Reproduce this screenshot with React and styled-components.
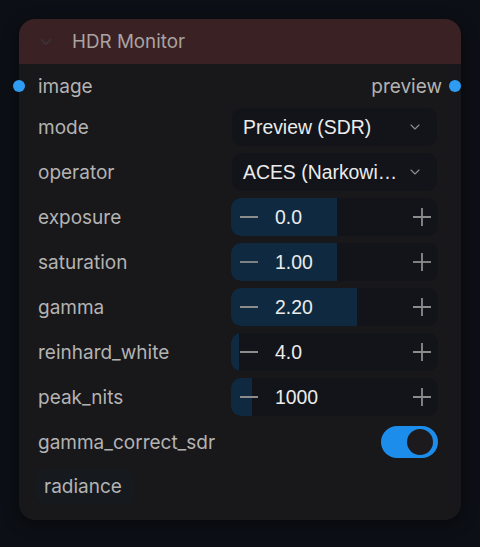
import styled, { createGlobalStyle } from 'styled-components'
import { ChevronDown } from 'lucide-react'

const GlobalStyle = createGlobalStyle`
  html, body {
    margin: 0;
    padding: 0;
    background: #0c0f15;
  }
  body {
    font-family: Inter, 'Noto Sans', sans-serif;
  }
`

const Page = styled.div`
  padding: 19px 19px 29px 19px;
  min-height: 547px;
  box-sizing: border-box;
`

const Node = styled.div`
  width: 442px;
  background: #18171a;
  border-radius: 16px;
  box-shadow: 0 4px 16px rgba(0, 0, 0, 0.45);
  position: relative;
`

const Header = styled.div`
  height: 45px;
  display: flex;
  align-items: center;
  gap: 17px;
  padding-left: 18px;
  background: #3a2123;
  border-radius: 16px 16px 0 0;
  color: #aba3a3;
  font-size: 18.8px;
  svg {
    color: #3d333b;
  }
`

const Body = styled.div`
  display: flex;
  flex-direction: column;
  gap: 7px;
  padding: 5px 23px 16px 19px;
`

const Row = styled.div`
  height: ${({ $h }) => $h || 38}px;
  display: flex;
  align-items: center;
  justify-content: space-between;
  position: relative;
  margin-bottom: ${({ $mb }) => $mb || 0}px;
`

const Label = styled.span`
  color: #b3b3b3;
  font-size: 19px;
  margin-right: ${({ $mr }) => $mr || 0}px;
`

const Dot = styled.span`
  position: absolute;
  top: 50%;
  width: 12px;
  height: 12px;
  border-radius: 50%;
  background: #2f9cf4;
  transform: translate(-50%, -50%);
  ${({ $side }) => ($side === 'left' ? 'left: -19px;' : 'right: -29px;')}
`

const Widget = styled.div`
  width: 207px;
  height: 38px;
  box-sizing: border-box;
  border-radius: 10px;
  background: #121419;
  display: flex;
  align-items: center;
  position: relative;
  overflow: hidden;
  font-family: 'Liberation Sans', Arial, sans-serif;
  font-size: 19.4px;
  color: #ececec;
`

const Select = styled(Widget)`
  padding: 0 10px 0 11px;
  justify-content: space-between;
  width: 205px;
  margin-right: 1px;
  svg {
    color: #8d8d8d;
    flex: none;
    margin-right: 4px;
  }
`

const SelectText = styled.span`
  white-space: nowrap;
`

const Fill = styled.div`
  position: absolute;
  left: 0;
  top: 0;
  bottom: 0;
  background: #0f2a40;
`

const StepButton = styled.svg`
  position: relative;
  flex: none;
  color: #8c8c8c;
  margin: ${({ $side }) => ($side === 'left' ? '0 0 0 9px' : '0 7px 0 auto')};
`

const Value = styled.span`
  position: relative;
  margin-left: 17px;
`

const Toggle = styled.div`
  width: 57px;
  height: 32px;
  border-radius: 16px;
  background: #1c8deb;
  display: flex;
  align-items: center;
  justify-content: flex-end;
  padding-right: 5px;
  box-sizing: border-box;
`

const Knob = styled.span`
  width: 26px;
  height: 26px;
  border-radius: 50%;
  background: #1c1a1d;
`

const Badge = styled.span`
  align-self: flex-start;
  margin: 1px 0 0 -3px;
  height: 35px;
  padding: 0 12px 0 9px;
  display: flex;
  align-items: center;
  border-radius: 10px;
  background: #161a1f;
  color: #b3b3b3;
  font-size: 19px;
`

function MinusIcon() {
  return (
    <StepButton $side="left" width="18" height="18" viewBox="0 0 18 18">
      <line x1="0" y1="9" x2="18" y2="9" stroke="currentColor" strokeWidth="1.8" />
    </StepButton>
  )
}

function PlusIcon() {
  return (
    <StepButton $side="right" width="18" height="18" viewBox="0 0 18 18">
      <line x1="0" y1="9" x2="18" y2="9" stroke="currentColor" strokeWidth="1.8" />
      <line x1="9" y1="0" x2="9" y2="18" stroke="currentColor" strokeWidth="1.8" />
    </StepButton>
  )
}

function NumberWidget({ value, fill }) {
  return (
    <Widget>
      <Fill style={{ width: `${fill}%` }} />
      <MinusIcon />
      <Value>{value}</Value>
      <PlusIcon />
    </Widget>
  )
}

const numbers = [
  { name: 'exposure', value: '0.0', fill: 51 },
  { name: 'saturation', value: '1.00', fill: 51 },
  { name: 'gamma', value: '2.20', fill: 61 },
  { name: 'reinhard_white', value: '4.0', fill: 4 },
  { name: 'peak_nits', value: '1000', fill: 10 },
]

export default function App() {
  return (
    <Page>
      <GlobalStyle />
      <Node>
        <Header>
          <ChevronDown size={18} strokeWidth={2.2} />
          <span>HDR Monitor</span>
        </Header>
        <Body>
          <Row $h={34} $mb={-2}>
            <Dot $side="left" />
            <Label>image</Label>
            <Label $mr={-4}>preview</Label>
            <Dot $side="right" />
          </Row>
          <Row>
            <Label>mode</Label>
            <Select>
              <SelectText>Preview (SDR)</SelectText>
              <ChevronDown size={16} strokeWidth={1.6} />
            </Select>
          </Row>
          <Row>
            <Label>operator</Label>
            <Select>
              <SelectText>ACES (Narkowi…</SelectText>
              <ChevronDown size={16} strokeWidth={1.6} />
            </Select>
          </Row>
          {numbers.map((n) => (
            <Row key={n.name}>
              <Label>{n.name}</Label>
              <NumberWidget value={n.value} fill={n.fill} />
            </Row>
          ))}
          <Row>
            <Label>gamma_correct_sdr</Label>
            <Toggle>
              <Knob />
            </Toggle>
          </Row>
          <Badge>radiance</Badge>
        </Body>
      </Node>
    </Page>
  )
}
